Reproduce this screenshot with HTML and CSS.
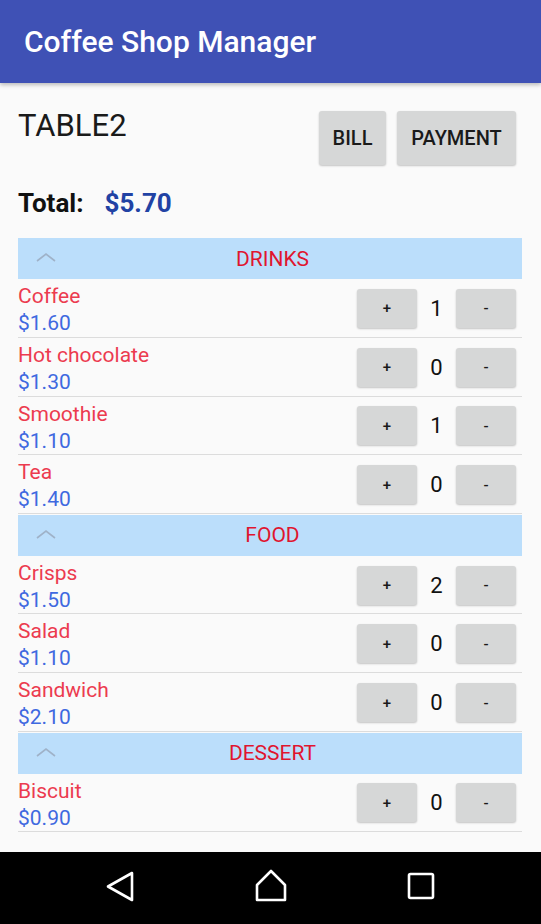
FILE: index.html
```html
<!DOCTYPE html>
<html lang="en">
<head>
    <meta charset="UTF-8">
    <meta name="viewport" content="width=device-width, initial-scale=1.0">
    <title>Coffee Shop Manager</title>
    <link rel="stylesheet" href="styles.css">
</head>
<body>
    <div class="screen">
        <header class="appbar">Coffee Shop Manager</header>

        <main class="content">
            <div class="table-head">
                <h1 class="table-name">TABLE2</h1>
                <div class="actions">
                    <button class="btn btn-bill">BILL</button>
                    <button class="btn btn-pay">PAYMENT</button>
                </div>
            </div>

            <div class="total">
                <span class="total-label">Total:</span>
                <span class="total-value">$5.70</span>
            </div>

            <div class="category">
                <svg class="chevron" width="20" height="10" viewBox="0 0 20 10"><polyline points="1,9 10,2 19,9"/></svg>
                <span class="category-name">DRINKS</span>
            </div>
            <div class="item">
                <div class="item-info"><div class="item-name">Coffee</div><div class="item-price">$1.60</div></div>
                <div class="qty"><button class="btn btn-small">+</button><span class="count">1</span><button class="btn btn-small">-</button></div>
            </div>
            <div class="item">
                <div class="item-info"><div class="item-name">Hot chocolate</div><div class="item-price">$1.30</div></div>
                <div class="qty"><button class="btn btn-small">+</button><span class="count">0</span><button class="btn btn-small">-</button></div>
            </div>
            <div class="item">
                <div class="item-info"><div class="item-name">Smoothie</div><div class="item-price">$1.10</div></div>
                <div class="qty"><button class="btn btn-small">+</button><span class="count">1</span><button class="btn btn-small">-</button></div>
            </div>
            <div class="item">
                <div class="item-info"><div class="item-name">Tea</div><div class="item-price">$1.40</div></div>
                <div class="qty"><button class="btn btn-small">+</button><span class="count">0</span><button class="btn btn-small">-</button></div>
            </div>

            <div class="category">
                <svg class="chevron" width="20" height="10" viewBox="0 0 20 10"><polyline points="1,9 10,2 19,9"/></svg>
                <span class="category-name">FOOD</span>
            </div>
            <div class="item">
                <div class="item-info"><div class="item-name">Crisps</div><div class="item-price">$1.50</div></div>
                <div class="qty"><button class="btn btn-small">+</button><span class="count">2</span><button class="btn btn-small">-</button></div>
            </div>
            <div class="item">
                <div class="item-info"><div class="item-name">Salad</div><div class="item-price">$1.10</div></div>
                <div class="qty"><button class="btn btn-small">+</button><span class="count">0</span><button class="btn btn-small">-</button></div>
            </div>
            <div class="item">
                <div class="item-info"><div class="item-name">Sandwich</div><div class="item-price">$2.10</div></div>
                <div class="qty"><button class="btn btn-small">+</button><span class="count">0</span><button class="btn btn-small">-</button></div>
            </div>

            <div class="category">
                <svg class="chevron" width="20" height="10" viewBox="0 0 20 10"><polyline points="1,9 10,2 19,9"/></svg>
                <span class="category-name">DESSERT</span>
            </div>
            <div class="item">
                <div class="item-info"><div class="item-name">Biscuit</div><div class="item-price">$0.90</div></div>
                <div class="qty"><button class="btn btn-small">+</button><span class="count">0</span><button class="btn btn-small">-</button></div>
            </div>
        </main>

        <nav class="navbar">
            <div class="nav-slot">
                <svg width="30" height="32" viewBox="0 0 30 32"><polygon points="26,3 2,16.5 26,30"/></svg>
            </div>
            <div class="nav-slot">
                <svg width="32" height="34" viewBox="0 0 32 34"><polygon points="16,2 30,16 30,31 2,31 2,16"/></svg>
            </div>
            <div class="nav-slot">
                <svg width="30" height="30" viewBox="0 0 30 30"><rect x="3" y="3" width="24" height="24" rx="1.5"/></svg>
            </div>
        </nav>
    </div>
</body>
</html>
```

FILE: styles.css
```css
* {
    box-sizing: border-box;
}
body {
    margin: 0;
    font-family: Roboto, "Liberation Sans", sans-serif;
    background-color: #fafafa;
}
.screen {
    height: 100vh;
    display: flex;
    flex-direction: column;
}
.appbar {
    height: 83px;
    flex-shrink: 0;
    display: flex;
    align-items: center;
    padding-left: 24px;
    padding-bottom: 0;
    background-color: #3f51b5;
    color: #fff;
    font-size: 30px;
    font-weight: 500;
    box-shadow: 0 2px 4px rgba(0, 0, 0, 0.25);
    position: relative;
    z-index: 1;
}
.content {
    flex: 1;
    overflow: hidden;
    padding: 0 19px 0 18px;
}
.table-head {
    display: flex;
    justify-content: space-between;
    align-items: flex-start;
    margin-top: 25px;
}
.table-name {
    margin: 0;
    font-size: 31px;
    font-weight: 400;
    line-height: 36px;
    color: #1a1a1a;
}
.actions {
    display: flex;
    gap: 11px;
    margin-top: 3px;
    margin-right: 6px;
}
.btn {
    border: none;
    border-radius: 3px;
    background-color: #d6d7d7;
    box-shadow: 0 1px 2px rgba(0, 0, 0, 0.22);
    font-family: inherit;
    color: #1a1a1a;
    padding: 0;
}
.btn-bill,
.btn-pay {
    height: 54px;
    font-size: 20px;
    font-weight: 500;
}
.btn-bill {
    width: 67px;
}
.btn-pay {
    width: 119px;
}
.total {
    display: flex;
    gap: 21px;
    margin-top: 23px;
    font-size: 26px;
    font-weight: 700;
    line-height: 30px;
}
.total-label {
    color: #111;
}
.total-value {
    color: #2142a4;
}
.category {
    position: relative;
    height: 41px;
    margin-top: 20px;
    background-color: #bbdefb;
    display: flex;
    align-items: center;
    justify-content: center;
}
.item + .category {
    margin-top: 0.5px;
}
.chevron {
    position: absolute;
    left: 18px;
    top: 14px;
    fill: none;
    stroke: #9fb2c8;
    stroke-width: 1.6;
}
.category-name {
    color: #e0152f;
    font-size: 21px;
    padding-left: 5px;
}
.item {
    height: 58.8px;
    display: flex;
    align-items: center;
    justify-content: space-between;
    border-bottom: 1px solid #dcdcdc;
}
.item-info {
    align-self: flex-start;
    padding-top: 4px;
    font-size: 21px;
    line-height: 27px;
}
.item-name {
    color: #ec3b4f;
}
.item-price {
    color: #3f69e0;
}
.qty {
    display: flex;
    align-items: center;
    margin-right: 6px;
    margin-top: 1px;
}
.btn-small {
    width: 60px;
    height: 39px;
    font-size: 15px;
    font-weight: 500;
}
.count {
    width: 39px;
    text-align: center;
    font-size: 22px;
    color: #111;
}
.navbar {
    height: 72px;
    flex-shrink: 0;
    background-color: #000;
    display: flex;
    justify-content: center;
    align-items: center;
}
.nav-slot {
    width: 150px;
    display: flex;
    justify-content: center;
    padding-bottom: 4px;
}
.nav-slot svg {
    fill: none;
    stroke: #fff;
    stroke-width: 2.6;
    stroke-linejoin: round;
}
```
